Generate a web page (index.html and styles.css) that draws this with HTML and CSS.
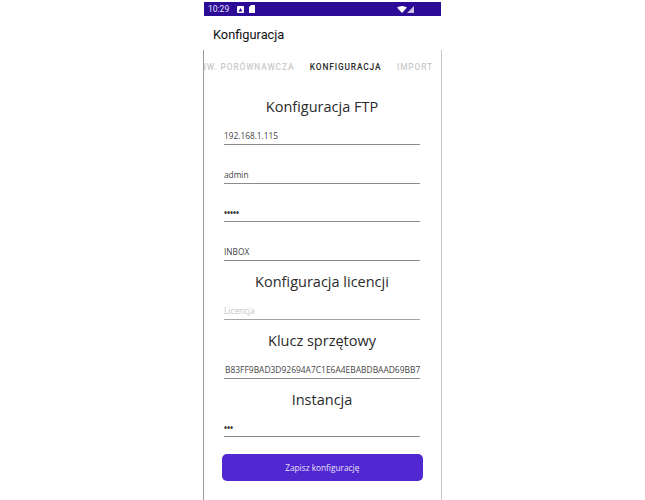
FILE: index.html
```html
<!DOCTYPE html>
<html lang="pl">
<head>
<meta charset="utf-8">
<title>Konfiguracja</title>
<link rel="stylesheet" href="styles.css">
</head>
<body>
<div class="phone">
  <div class="status">
    <span class="time">10:29</span>
    <svg class="ico" width="7" height="7" viewBox="0 0 7 7"><rect width="7" height="7" rx="1" fill="#fff"/><path d="M1.500 5.500 3.500 2l2 3.500z" fill="#2c0c96"/></svg>
    <svg class="ico" width="6" height="8" viewBox="0 0 6 8"><path d="M2 0h4v8H0V2z" fill="#fff"/></svg>
    <span class="spacer"></span>
    <svg class="ico" width="10" height="7" viewBox="0 0 10 7"><path d="M0 1.500Q5-1.500 10 1.500L5 7z" fill="#fff"/></svg>
    <svg class="ico signal" width="7" height="7" viewBox="0 0 7 7"><path d="M7 0v7H0z" fill="#fff" fill-opacity=".75"/></svg>
  </div>
  <div class="appbar">Konfiguracja</div>
  <div class="frame">
    <div class="tabs">
      <span class="tab first">NW. PORÓWNAWCZA</span>
      <span class="tab active">KONFIGURACJA</span>
      <span class="tab">IMPORT</span>
    </div>
    <div class="form">
      <h2 class="head h-first">Konfiguracja FTP</h2>
      <div class="field">192.168.1.115</div>
      <div class="field f-next">admin</div>
      <div class="field f-next dots">•••••</div>
      <div class="field f-next">INBOX</div>
      <h2 class="head">Konfiguracja licencji</h2>
      <div class="field placeholder">Licencja</div>
      <h2 class="head">Klucz sprzętowy</h2>
      <div class="field key">B83FF9BAD3D92694A7C1E6A4EBABDBAAD69BB7</div>
      <h2 class="head">Instancja</h2>
      <div class="field f-tight dots">•••</div>
      <button class="save" type="button">Zapisz konfigurację</button>
    </div>
  </div>
</div>
</body>
</html>
```
FILE: styles.css
```css
html, body { margin: 0; padding: 0; background: #fff; }
body { height: 500px; overflow: hidden; }
.phone { width: 237px; margin: 2px 0 0 204px; font-family: "Open Sans", sans-serif; color: #222; }
.status { height: 14px; background: #2c0c96; color: #e6e0f6; display: flex; align-items: center; padding: 0 27px 0 4px; font: 8.500px/14px Roboto, sans-serif; gap: 5px; }
.time { margin-right: 3px; }
.spacer { flex: 1; }
.signal { margin-left: -5px; }
.appbar { height: 34px; box-sizing: border-box; padding: 10px 0 0 9px; font: 400 12.800px/17px Roboto, sans-serif; color: #111; }
.frame { margin-left: -1px; margin-right: -1px; border-left: 1px solid #9a9a9a; border-right: 1px solid #c4c4c4; height: 450px; }
.tabs { height: 34px; display: flex; align-items: center; gap: 15.500px; overflow: hidden; font: 500 8.400px/12px Roboto, sans-serif; letter-spacing: .85px; color: #cbcbcb; white-space: nowrap; }
.tab { flex: none; }
.tab.first { margin-left: -4px; }
.tab.active { color: #2a2a2a; }
.form { padding: 0 21px 0 20px; display: flex; flex-direction: column; }
.head { margin: 10px 0 0; font-weight: 400; font-size: 14.500px; line-height: 22px; text-align: center; color: #2a2a2a; }
.h-first { margin-top: 12px; }
.field { box-sizing: border-box; height: 21px; margin-top: 6px; padding-top: 6px; border-bottom: 1px solid #8c8c8c; font-size: 8.300px; line-height: 12px; color: #444; white-space: nowrap; overflow: hidden; }
.f-next { margin-top: 17.700px; }
.f-tight { margin-top: 5px; }
.placeholder { color: #c4c4c4; border-bottom-color: #a5a5a5; }
.key { font-size: 8.450px; padding-left: 1px; }
.dots { font-size: 8px; font-weight: 700; color: #333; }
.save { margin: 16.500px 0 0 -2px; width: 200.500px; height: 27px; border: 0; border-radius: 5px; background: #5027d0; color: #e8e2fa; font: 8.300px "Open Sans", sans-serif; }
```
